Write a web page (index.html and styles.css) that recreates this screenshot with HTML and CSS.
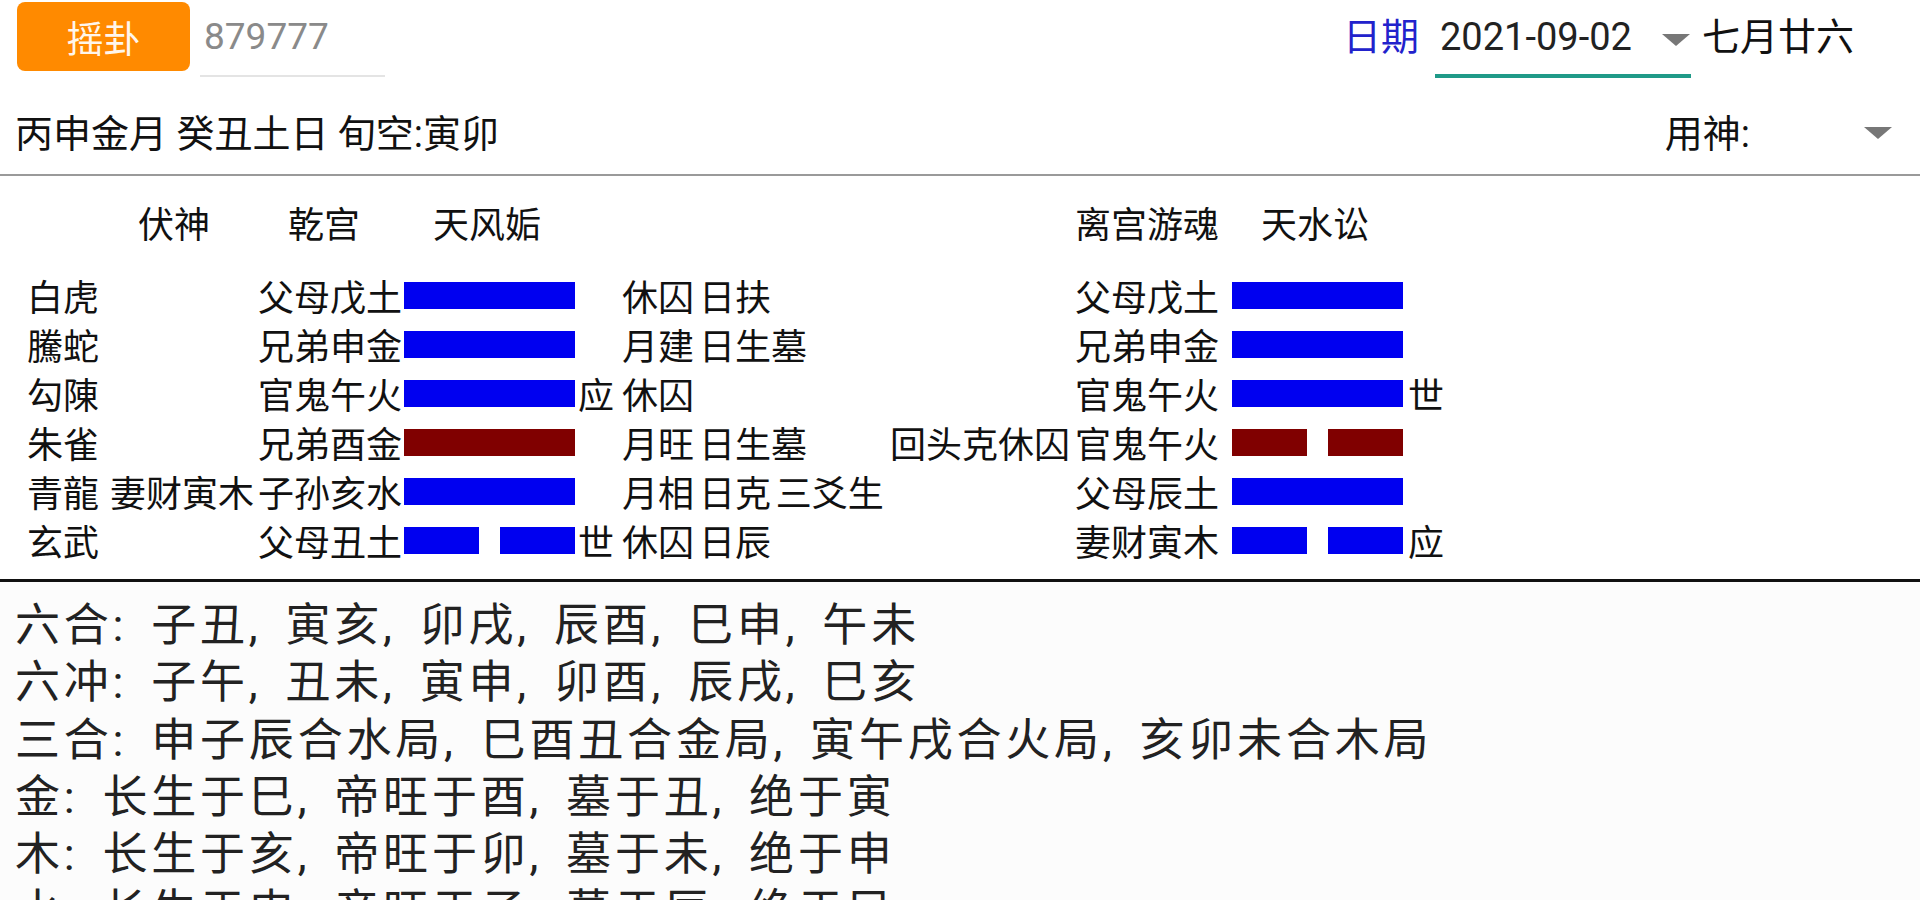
FILE: index.html
```html
<!DOCTYPE html>
<html lang="zh-CN">
<head>
<meta charset="utf-8">
<title>摇卦</title>
<link rel="stylesheet" href="styles.css">
</head>
<body>
<header class="topbar">
  <div class="shake">摇卦</div>
  <div class="num-input">879777</div>
  <div class="spacer"></div>
  <div class="date-label">日期</div>
  <div class="date-field"><span class="date-value">2021-09-02</span><span class="tri"></span></div>
  <div class="lunar">七月廿六</div>
</header>

<div class="infobar">
  <div class="ganzhi">丙申金月 癸丑土日 旬空:寅卯</div>
  <div class="spacer"></div>
  <div class="yongshen">用神:</div>
  <span class="tri tri-ys"></span>
</div>

<section class="gua">
  <div class="row head">
    <div class="c1"></div>
    <div class="c2 h-fu">伏神</div>
    <div class="c3 h-gong">乾宫</div>
    <div class="c4 h-name">天风姤</div>
    <div class="c5"></div>
    <div class="c6"></div>
    <div class="c7"></div>
    <div class="c8">离宫游魂</div>
    <div class="c9 h-name">天水讼</div>
    <div class="c10"></div>
  </div>

  <div class="row">
    <div class="c1">白虎</div><div class="c2"></div><div class="c3">父母戊土</div>
    <div class="c4"><div class="yao yang"></div></div><div class="c5"></div>
    <div class="c6">休囚 日扶</div><div class="c7"></div>
    <div class="c8">父母戊土</div><div class="c9"><div class="yao yang"></div></div><div class="c10"></div>
  </div>
  <div class="row">
    <div class="c1">騰蛇</div><div class="c2"></div><div class="c3">兄弟申金</div>
    <div class="c4"><div class="yao yang"></div></div><div class="c5"></div>
    <div class="c6">月建 日生墓</div><div class="c7"></div>
    <div class="c8">兄弟申金</div><div class="c9"><div class="yao yang"></div></div><div class="c10"></div>
  </div>
  <div class="row">
    <div class="c1">勾陳</div><div class="c2"></div><div class="c3">官鬼午火</div>
    <div class="c4"><div class="yao yang"></div></div><div class="c5">应</div>
    <div class="c6">休囚</div><div class="c7"></div>
    <div class="c8">官鬼午火</div><div class="c9"><div class="yao yang"></div></div><div class="c10">世</div>
  </div>
  <div class="row">
    <div class="c1">朱雀</div><div class="c2"></div><div class="c3">兄弟酉金</div>
    <div class="c4"><div class="yao yang moving"></div></div><div class="c5"></div>
    <div class="c6">月旺 日生墓</div><div class="c7">回头克休囚</div>
    <div class="c8">官鬼午火</div><div class="c9"><div class="yao yin moving"><i></i><i></i></div></div><div class="c10"></div>
  </div>
  <div class="row">
    <div class="c1">青龍</div><div class="c2 fushen">妻财寅木</div><div class="c3">子孙亥水</div>
    <div class="c4"><div class="yao yang"></div></div><div class="c5"></div>
    <div class="c6">月相 日克 三爻生</div><div class="c7"></div>
    <div class="c8">父母辰土</div><div class="c9"><div class="yao yang"></div></div><div class="c10"></div>
  </div>
  <div class="row">
    <div class="c1">玄武</div><div class="c2"></div><div class="c3">父母丑土</div>
    <div class="c4"><div class="yao yin"><i></i><i></i></div></div><div class="c5">世</div>
    <div class="c6">休囚 日辰</div><div class="c7"></div>
    <div class="c8">妻财寅木</div><div class="c9"><div class="yao yin"><i></i><i></i></div></div><div class="c10">应</div>
  </div>
</section>

<section class="notes">
  <p>六合: 子丑, 寅亥, 卯戌, 辰酉, 巳申, 午未</p>
  <p>六冲: 子午, 丑未, 寅申, 卯酉, 辰戌, 巳亥</p>
  <p>三合: 申子辰合水局, 巳酉丑合金局, 寅午戌合火局, 亥卯未合木局</p>
  <p>金: 长生于巳, 帝旺于酉, 墓于丑, 绝于寅</p>
  <p>木: 长生于亥, 帝旺于卯, 墓于未, 绝于申</p>
  <p>水: 长生于申, 帝旺于子, 墓于辰, 绝于巳</p>
</section>
</body>
</html>
```

FILE: styles.css
```css
html, body {
  margin: 0;
  padding: 0;
  background: #ffffff;
}
body {
  width: 1920px;
  height: 900px;
  overflow: hidden;
  font-family: Roboto, "Noto Sans CJK SC", sans-serif;
  color: #111111;
}

.spacer { flex: 1; }

/* top bar */
.topbar {
  display: flex;
  align-items: flex-start;
  height: 80px;
}
.shake {
  margin: 2px 0 0 17px;
  width: 173px;
  height: 69px;
  border-radius: 8px;
  background: #ff8a00;
  color: #fff6ec;
  font-size: 37px;
  display: flex;
  align-items: center;
  justify-content: center;
}
.num-input {
  margin-left: 10px;
  width: 185px;
  height: 77px;
  box-sizing: border-box;
  padding-left: 4px;
  line-height: 74px;
  font-size: 37px;
  color: #8a8a8a;
  border-bottom: 2px solid #e4e4e4;
}
.date-label {
  line-height: 74px;
  font-size: 38px;
  color: #2222cc;
  margin-right: 16px;
}
.date-field {
  width: 256px;
  height: 78px;
  box-sizing: border-box;
  border-bottom: 4px solid #1f9a88;
  display: flex;
  align-items: flex-start;
  padding-left: 5px;
}
.date-value {
  line-height: 74px;
  font-size: 38px;
  color: #222222;
}
.tri {
  display: block;
  width: 0;
  height: 0;
  border-left: 14px solid transparent;
  border-right: 14px solid transparent;
  border-top: 12px solid #777777;
}
.date-field .tri {
  margin: 34px 1px 0 auto;
}
.lunar {
  margin-left: 11px;
  margin-right: 66px;
  line-height: 74px;
  font-size: 38px;
  color: #111111;
}

/* info bar */
.infobar {
  height: 96px;
  box-sizing: border-box;
  padding-top: 7px;
  display: flex;
  align-items: center;
  border-bottom: 2px solid #9a9a9a;
  font-size: 38px;
}
.ganzhi { margin-left: 15px; }
.yongshen { margin-right: 114px; }
.tri-ys { margin-right: 28px; margin-top: 4px; }

/* gua table */
.gua {
  padding: 20px 0 16px 27px;
  border-bottom: 3px solid #111111;
  font-size: 36px;
}
.row {
  display: grid;
  grid-template-columns: 83px 142px 150px 175px 43px 265px 190px 155px 175px 45px;
  height: 49px;
  align-items: center;
  white-space: nowrap;
}
.row.head { margin-bottom: 24px; }
.c3 { text-align: right; }
.c5 { padding-left: 1px; }
.c6 { padding-left: 2px; word-spacing: -4px; }
.c7 { padding-left: 5px; }
.c10 { padding-left: 3px; }
.h-fu { padding-left: 28px; }
.row .h-gong { text-align: left; padding-left: 36px; }
.h-name { padding-left: 31px; }

.yao {
  margin-left: 2px;
  width: 171px;
  height: 27px;
}
.yao.yang { background: #0000f0; }
.yao.yang.moving { background: #800000; }
.yao.yin {
  display: flex;
  justify-content: space-between;
}
.yao.yin i {
  display: block;
  width: 75px;
  height: 27px;
  background: #0000f0;
}
.yao.yin.moving i { background: #800000; }

/* notes */
.notes {
  background: #fcfcfc;
  padding: 15px 0 0 15px;
  height: 400px;
}
.notes p {
  margin: 0;
  font-size: 45px;
  letter-spacing: 3.8px;
  word-spacing: 9px;
  line-height: 57.25px;
  color: #222222;
  white-space: nowrap;
}
```
